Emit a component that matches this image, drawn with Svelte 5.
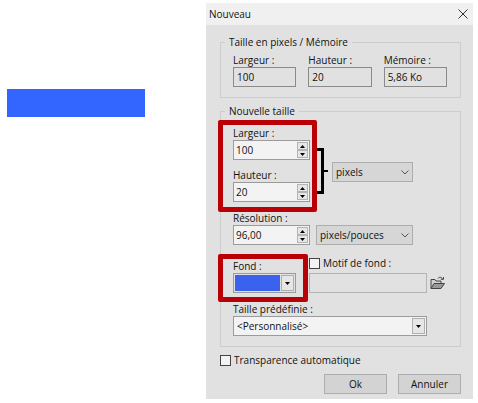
<script>
  let width = $state('100')
  let height = $state('20')
  let resolution = $state('96,00')
  let unit = $state('pixels')
  let resolutionUnit = $state('pixels/pouces')
  let preset = $state('<Personnalisé>')
  let pattern = $state('')
  let usePattern = $state(false)
  let transparency = $state(false)

  const current = [
    { id: 'cur-width', label: 'Largeur :', value: '100' },
    { id: 'cur-height', label: 'Hauteur :', value: '20' },
    { id: 'cur-memory', label: 'Mémoire :', value: '5,86 Ko' }
  ]

  function step(value, by) {
    const decimals = (value.split(',')[1] || '').length
    const next = Math.max(1, parseFloat(value.replace(',', '.')) + by)
    return next.toFixed(decimals).replace('.', ',')
  }
</script>

{#snippet spinner(name, change)}
  <span class="steps">
    <button type="button" aria-label="Augmenter {name}" onclick={() => change(1)}>
      <svg width="5" height="3" viewBox="0 0 5 3"><path d="M0 3 2.5 0 5 3z" /></svg>
    </button>
    <button type="button" aria-label="Diminuer {name}" onclick={() => change(-1)}>
      <svg width="5" height="3" viewBox="0 0 5 3"><path d="M0 0h5L2.5 3z" /></svg>
    </button>
  </span>
{/snippet}

{#snippet chevron()}
  <svg class="chevron" width="8" height="5" viewBox="0 0 8 5"><path d="M.5.5 4 4 7.5.5" /></svg>
{/snippet}

<div class="page">
  <div class="preview"></div>

  <form class="dialog" onsubmit={(e) => e.preventDefault()}>
    <header>
      <h1>Nouveau</h1>
      <button type="button" class="close" aria-label="Fermer">
        <svg width="10" height="10" viewBox="0 0 10 10"><path d="M.5.5l9 9M9.5.5l-9 9" /></svg>
      </button>
    </header>

    <div class="content">
      <fieldset class="current">
        <legend>Taille en pixels / Mémoire</legend>
        <div class="columns">
          {#each current as item}
            <div class="field">
              <label for={item.id}>{item.label}</label>
              <input id={item.id} class="readonly" value={item.value} readonly />
            </div>
          {/each}
        </div>
      </fieldset>

      <fieldset class="new-size">
        <legend>Nouvelle taille</legend>

        <div class="size">
          <div class="dimensions">
            <div class="field">
              <label for="width">Largeur :</label>
              <div class="box number">
                <input id="width" bind:value={width} />
                {@render spinner('la largeur', (by) => (width = step(width, by)))}
              </div>
            </div>
            <div class="field">
              <label for="height">Hauteur :</label>
              <div class="box number">
                <input id="height" bind:value={height} />
                {@render spinner('la hauteur', (by) => (height = step(height, by)))}
              </div>
            </div>
            <div class="highlight"></div>
          </div>
          <svg class="bracket" width="11" height="46" viewBox="0 0 11 46">
            <path d="M0 1.5h5.5v43H0" />
            <path class="tick" d="M5 23h6" />
          </svg>
          <div class="select unit">
            <select aria-label="Unité" bind:value={unit}>
              <option>pixels</option>
              <option>cm</option>
              <option>pouces</option>
            </select>
            {@render chevron()}
          </div>
        </div>

        <div class="field">
          <label for="resolution">Résolution :</label>
          <div class="resolution">
            <div class="box number">
              <input id="resolution" bind:value={resolution} />
              {@render spinner('la résolution', (by) => (resolution = step(resolution, by)))}
            </div>
            <div class="select">
              <select aria-label="Unité de résolution" bind:value={resolutionUnit}>
                <option>pixels/pouces</option>
                <option>pixels/cm</option>
              </select>
              {@render chevron()}
            </div>
          </div>
        </div>

        <div class="background">
          <div class="field color">
            <label for="color">Fond :</label>
            <button type="button" id="color" class="box picker">
              <span class="swatch"></span>
              <span class="drop">
                <svg width="5" height="3" viewBox="0 0 5 3"><path d="M0 0h5L2.5 3z" /></svg>
              </span>
            </button>
            <div class="highlight"></div>
          </div>
          <div class="field pattern">
            <label class="check">
              <input type="checkbox" bind:checked={usePattern} />
              Motif de fond :
            </label>
            <div class="file">
              <input class="path" aria-label="Motif de fond" disabled={!usePattern} bind:value={pattern} />
              <button type="button" class="open" aria-label="Ouvrir un motif">
                <svg width="15" height="14" viewBox="0 0 15 14">
                  <path class="back" d="M1 12.5V3.5h4l1 1.5h5v3" />
                  <path class="front" d="M1 12.5 4 7.5h10.5L11 12.5z" />
                  <path class="arrow" d="M8 2.5C9 .8 11.5.8 12.5 3M10.8 3.3h2.7V1" />
                </svg>
              </button>
            </div>
          </div>
        </div>

        <div class="field preset">
          <label for="preset">Taille prédéfinie :</label>
          <div class="box combo">
            <select id="preset" bind:value={preset}>
              <option>{'<Personnalisé>'}</option>
              <option>640 x 480</option>
              <option>800 x 600</option>
            </select>
            <span class="drop">
              <svg width="5" height="3" viewBox="0 0 5 3"><path d="M0 0h5L2.5 3z" /></svg>
            </span>
          </div>
        </div>
      </fieldset>

      <label class="check transparency">
        <input type="checkbox" bind:checked={transparency} />
        Transparence automatique
      </label>

      <div class="actions">
        <button type="submit">Ok</button>
        <button type="button">Annuler</button>
      </div>
    </div>
  </form>
</div>

<style>
  :global(body) {
    background: #fff;
  }

  .page, .page * {
    box-sizing: border-box;
  }

  .page {
    display: flex;
    align-items: flex-start;
    padding: 3px 5px 3px 7px;
    font-family: "Open Sans", "Noto Sans", sans-serif;
    font-size: 10px;
    line-height: 14px;
    color: #111;
  }

  button, input, select {
    font: inherit;
    color: inherit;
    margin: 0;
    padding: 0;
    border-radius: 0;
    outline: none;
  }

  svg {
    display: block;
  }

  .preview {
    width: 138px;
    height: 28px;
    margin: 86px 61px 0 0;
    background: #3366ff;
  }

  .dialog {
    flex: 1;
    min-width: 0;
    background: #e1e1e1;
  }

  header {
    display: flex;
    align-items: center;
    justify-content: space-between;
    height: 22px;
    padding: 0 5px 0 3px;
    background: #f0f0f0;
  }

  h1 {
    margin: 0;
    font-size: 10px;
    font-weight: 400;
  }

  .close {
    border: 0;
    background: none;
  }

  .close path {
    stroke: #333;
    fill: none;
  }

  .content {
    padding: 10px 12px 5px 14px;
  }

  fieldset {
    min-width: 0;
    margin: 0 0 6px;
    padding: 0;
    border: 1px solid #cdcdcd;
  }

  legend {
    margin-left: -8px;
    padding: 0 4px;
  }

  .field {
    display: flex;
    flex-direction: column;
    min-width: 0;
  }

  .field label {
    white-space: nowrap;
  }

  .current {
    padding: 4px 13px 10px 12px;
  }

  .columns {
    display: grid;
    grid-template-columns: repeat(3, 1fr);
    gap: 12px;
  }

  .readonly {
    width: 100%;
    height: 20px;
    padding: 0 3px;
    border: 1px solid #8a8a8a;
    background: #e1e1e1;
  }

  .new-size {
    padding: 8px 33px 10px 12px;
  }

  .box {
    display: flex;
    height: 20px;
    padding: 1px;
    border: 1px solid #9b9b9b;
    background: #f3f3f3;
  }

  .number {
    width: 77px;
  }

  .number input {
    flex: 1;
    min-width: 0;
    padding: 0 1px;
    border: 0;
    background: none;
  }

  .steps {
    display: flex;
    flex-direction: column;
    width: 11px;
  }

  .steps button {
    display: flex;
    flex: 1;
    align-items: center;
    justify-content: center;
    border: 1px solid #b4b4b4;
    background: #e6e6e6;
  }

  .select {
    position: relative;
    flex: 1;
    min-width: 0;
    height: 20px;
  }

  .select select {
    appearance: none;
    width: 100%;
    height: 20px;
    padding: 0 3px;
    border: 1px solid #adadad;
    background: #d6d6d6;
  }

  .chevron {
    position: absolute;
    top: 8px;
    right: 4px;
    fill: none;
    stroke: #555;
    pointer-events: none;
  }

  .size {
    display: flex;
    align-items: flex-end;
    margin: 0 14px 9px 0;
  }

  .dimensions {
    position: relative;
    display: flex;
    flex-direction: column;
    gap: 8px;
  }

  .highlight {
    position: absolute;
    inset: -6px -7px -10px -15px;
    border: 5px solid #b80006;
    border-radius: 2px;
    pointer-events: none;
  }

  .bracket {
    flex: none;
    margin: 0 4px 8px 7px;
    fill: none;
    stroke: #000;
    stroke-width: 3;
  }

  .bracket .tick {
    stroke-width: 2;
  }

  .unit {
    margin-bottom: 20px;
  }

  .resolution {
    display: flex;
    gap: 6px;
    margin-right: 14px;
  }

  .background {
    display: flex;
    gap: 13px;
    margin: 14px -18px 9px 0;
  }

  .color {
    position: relative;
    width: 63px;
  }

  .color .highlight {
    inset: -5px -12px -9px -15px;
  }

  .picker {
    width: 100%;
    background: #e1e1e1;
  }

  .swatch {
    flex: 1;
    align-self: stretch;
    background: #3a62ee;
  }

  .drop {
    display: flex;
    align-items: center;
    align-self: stretch;
    justify-content: center;
    width: 13px;
    border: 1px solid #b0b0b0;
    background: #e6e6e6;
  }

  .picker .drop {
    margin-left: 1px;
  }

  .pattern {
    flex: 1;
  }

  .check {
    display: flex;
    align-items: center;
    gap: 3px;
    height: 14px;
  }

  .pattern .check {
    margin: -3px 0 3px;
  }

  .check input {
    appearance: none;
    width: 11px;
    height: 11px;
    border: 1px solid #444;
    background: #f3f3f3;
  }

  .check input:checked {
    box-shadow: inset 0 0 0 2px #f3f3f3;
    background: #333;
  }

  .file {
    display: flex;
    align-items: center;
    gap: 3px;
  }

  .path {
    flex: 1;
    min-width: 0;
    height: 20px;
    border: 1px solid #b4b4b4;
    background: #e1e1e1;
  }

  .open {
    border: 0;
    background: none;
  }

  .open path {
    stroke: #444;
    fill: none;
  }

  .open .back {
    fill: #d0d0d0;
  }

  .open .front {
    fill: #999;
  }

  .combo {
    position: relative;
  }

  .combo select {
    appearance: none;
    flex: 1;
    min-width: 0;
    padding: 0 2px;
    border: 0;
    background: none;
  }

  .combo .drop {
    pointer-events: none;
  }

  .transparency {
    white-space: nowrap;
  }

  .actions {
    display: flex;
    justify-content: flex-end;
    gap: 11px;
    margin-top: 7px;
  }

  .actions button {
    width: 63px;
    height: 20px;
    border: 1px solid #adadad;
    background: #d3d3d3;
  }
</style>
